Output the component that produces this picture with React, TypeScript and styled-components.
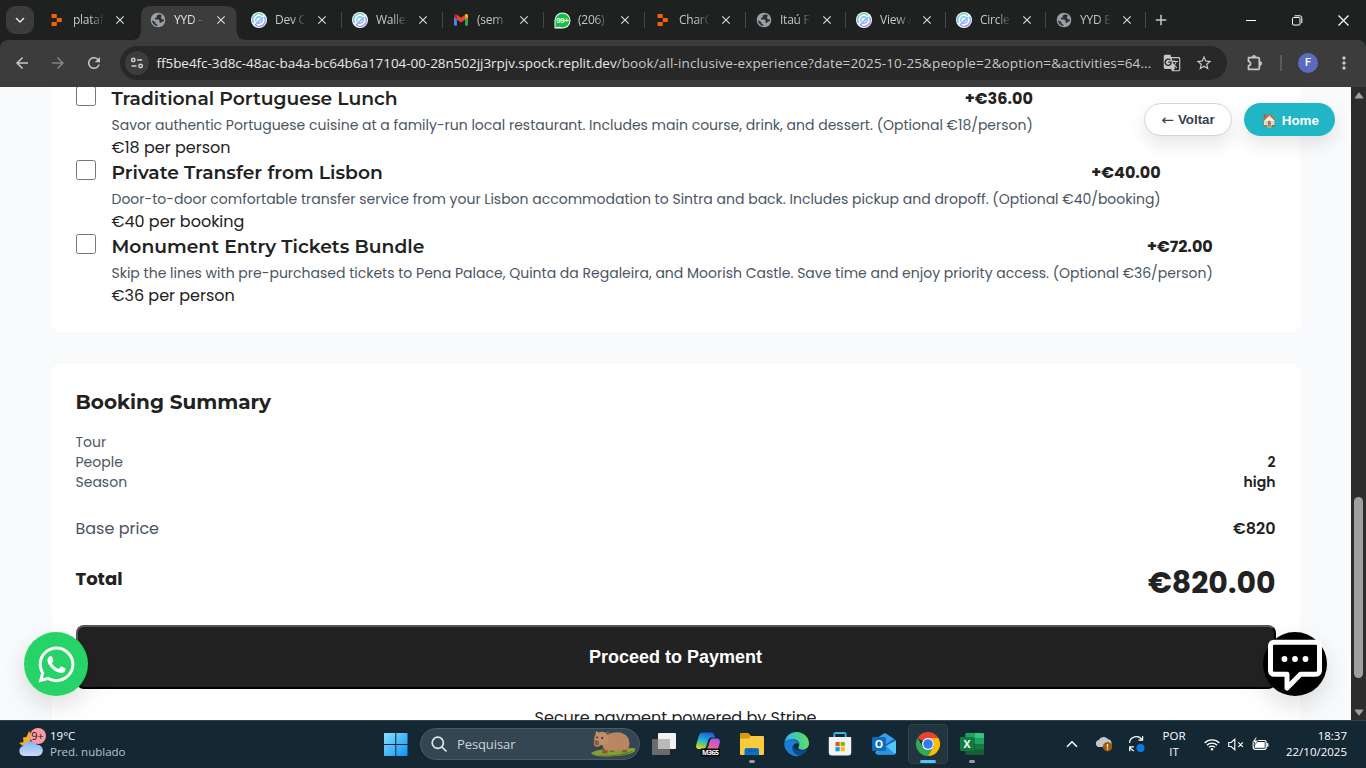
import React from "react";
import styled, { createGlobalStyle, css } from "styled-components";
import {
  MdArrowBack,
  MdArrowForward,
  MdRefresh,
  MdExpandMore,
  MdClose,
  MdAdd,
  MdGTranslate,
  MdStarBorder,
  MdMoreVert,
} from "react-icons/md";
import { FaWhatsapp } from "react-icons/fa";

const GlobalStyle = createGlobalStyle`
  * { box-sizing: border-box; }
  body { margin: 0; overflow: hidden; }
`;

const uiFont = `"Segoe UI", "Open Sans", "Noto Sans", sans-serif`;
const bodyFont = `Poppins, Inter, sans-serif`;
const headingFont = `Montserrat, Inter, sans-serif`;
const buttonFont = `Arial, "Liberation Sans", sans-serif`;

const Screen = styled.div`
  width: 1366px;
  height: 768px;
  display: flex;
  flex-direction: column;
  overflow: hidden;
  background: #1f2120;
`;

/* ---------- Browser chrome ---------- */

const TabStrip = styled.div`
  height: 40px;
  flex: none;
  display: flex;
  align-items: stretch;
  background: #1f2120;
  color: #c4c7c5;
`;

const TabSearch = styled.div`
  width: 28px;
  height: 28px;
  margin: 6px 5px 0 6px;
  border-radius: 9px;
  background: #3b3b3b;
  color: #e3e3e3;
  display: flex;
  align-items: center;
  justify-content: center;
  flex: none;
`;

const Tab = styled.div<{ $active?: boolean; $divider?: boolean; $width: number }>`
  position: relative;
  width: ${(p) => p.$width}px;
  flex: none;
  padding: 0 0 0 10px;
  display: flex;
  align-items: center;
  color: ${(p) => (p.$active ? "#e3e3e3" : "#c4c7c5")};
  ${(p) =>
    p.$divider &&
    css`
      &::after {
        content: "";
        position: absolute;
        right: 0;
        top: 12px;
        width: 1.5px;
        height: 16px;
        background: #464846;
      }
    `}
`;

const TabShape = styled.svg`
  position: absolute;
  left: -8px;
  top: 6px;
  width: 116px;
  height: 34px;
`;

const TabIcon = styled.span`
  position: relative;
  width: 16px;
  height: 16px;
  display: flex;
  align-items: center;
  justify-content: center;
  flex: none;
  svg { flex: none; }
`;

const TabTitle = styled.span`
  position: relative;
  width: 31px;
  flex: none;
  margin: 0 9px 0 8px;
  overflow: hidden;
  white-space: nowrap;
  font: 400 12px/16px ${uiFont};
  letter-spacing: -0.25px;
  mask-image: linear-gradient(to right, #000 55%, transparent 100%);
`;

const TabClose = styled.span`
  position: relative;
  display: flex;
  color: #dadada;
`;

const NewTab = styled.span`
  display: flex;
  align-items: center;
  margin-left: 6px;
`;

const WindowControls = styled.div`
  margin-left: auto;
  width: 138px;
  display: grid;
  grid-template-columns: repeat(3, 46px);
  align-items: center;
  justify-items: center;
`;

const Toolbar = styled.div`
  height: 47px;
  flex: none;
  display: flex;
  align-items: center;
  padding-bottom: 1px;
  background: #3c3c3c;
  border-radius: 8px 8px 0 0;
  color: #c7c7c7;
`;

const NavGroup = styled.div`
  display: flex;
  width: 120px;
  padding-left: 4px;
  flex: none;
`;

const NavButton = styled.span<{ $dim?: boolean }>`
  width: 36px;
  display: flex;
  justify-content: center;
  opacity: ${(p) => (p.$dim ? 0.5 : 1)};
`;

const Omnibox = styled.div`
  width: 1107px;
  height: 34px;
  flex: none;
  display: flex;
  align-items: center;
  padding: 0 14px 0 5px;
  border-radius: 17px;
  background: #282828;
`;

const SiteInfo = styled.span`
  width: 24px;
  height: 24px;
  margin-right: 7.5px;
  border-radius: 50%;
  background: #3c3c3c;
  display: flex;
  align-items: center;
  justify-content: center;
  flex: none;
`;

const Url = styled.span`
  flex: 1;
  white-space: nowrap;
  font: 400 13.5px/20px ${uiFont};
  letter-spacing: 0.12px;
  color: #c7c7c7;
`;

const UrlHost = styled.span`
  color: #e8e8e8;
  letter-spacing: -0.05px;
`;

const OmniIcons = styled.span`
  display: flex;
  align-items: center;
  gap: 14px;
`;

const ExtensionButton = styled.span`
  display: flex;
  margin-left: 18px;
`;

const ToolDivider = styled.span`
  width: 2px;
  height: 16px;
  margin: 0 16px 0 15px;
  background: #5a5a5a;
`;

const Avatar = styled.span`
  width: 20px;
  height: 20px;
  border-radius: 50%;
  background: #5c6bc0;
  color: #fff;
  font: 500 11px/20px Roboto, sans-serif;
  text-align: center;
  margin-right: 16px;
`;

/* ---------- Page ---------- */

const Viewport = styled.div`
  position: relative;
  height: 633px;
  flex: none;
  display: flex;
  overflow: hidden;
  background: #f8fafc;
`;

const Page = styled.main`
  width: 1351px;
  height: 633px;
  overflow: hidden;
  padding: 0 51.5px;
  display: flex;
  flex-direction: column;
  gap: 32px;
  font-family: ${bodyFont};
  color: #222;
`;

const Card = styled.section<{ $continued?: boolean }>`
  flex: none;
  background: #fff;
  border-radius: ${(p) => (p.$continued ? "0 0 8px 8px" : "8px")};
  padding: ${(p) => (p.$continued ? "0 24px 24px" : "24px")};
`;

const ActivityList = styled.div`
  margin-top: -1px;
`;

const Activity = styled.label`
  height: 74px;
  display: flex;
  align-items: flex-start;
  gap: 16px;
`;

const Checkbox = styled.input.attrs({ type: "checkbox" })`
  appearance: none;
  width: 20px;
  height: 20px;
  margin: 0;
  flex: none;
  border: 1px solid #767676;
  border-radius: 2.5px;
  background: #fff;
`;

const ActivityHead = styled.div`
  height: 25px;
  display: flex;
  justify-content: space-between;
  align-items: center;
`;

const ActivityTitle = styled.h3`
  margin: 0;
  font: 600 18.72px/25px ${headingFont};
  white-space: nowrap;
`;

const ActivityPrice = styled.span`
  font-size: 16px;
  font-weight: 700;
  line-height: 25px;
`;

const ActivityText = styled.p`
  margin: 4px 0 0;
  font-size: 14px;
  line-height: 20px;
  white-space: nowrap;
  color: #4b5563;
`;

const ActivityRate = styled.div`
  font-size: 16px;
  line-height: 25px;
`;

const SummaryTitle = styled.h2`
  margin: 0 0 16px;
  font: 700 20px/28px ${headingFont};
`;

const SummaryRow = styled.div<{ $size: number; $line: number }>`
  display: flex;
  justify-content: space-between;
  font-size: ${(p) => p.$size}px;
  line-height: ${(p) => p.$line}px;
  color: #4b5563;
`;

const SummaryValue = styled.span`
  font-weight: 600;
  color: #222;
`;

const BaseBlock = styled.div`
  margin: 24px 0;
`;

const TotalRow = styled.div`
  display: flex;
  justify-content: space-between;
  height: 36px;
  margin-bottom: 24px;
`;

const TotalLabel = styled.span`
  font-size: 18px;
  font-weight: 700;
  line-height: 28px;
`;

const TotalAmount = styled.span`
  font-size: 30px;
  font-weight: 700;
  line-height: 36px;
`;

const PayButton = styled.button`
  display: block;
  width: 100%;
  height: 64px;
  padding: 0;
  border: 2px solid;
  border-color: #555 #000 #000 #555;
  border-radius: 8px;
  background: #222;
  color: #fff;
  font: 700 18px/24px ${buttonFont};
`;

const SecureNote = styled.p`
  margin: 16px 0 0;
  text-align: center;
  font-size: 16px;
  line-height: 25px;
`;

const FloatingNav = styled.nav`
  position: absolute;
  top: 16px;
  right: 31px;
  display: flex;
  gap: 12px;
`;

const PillButton = styled.button<{ $primary?: boolean }>`
  width: ${(p) => (p.$primary ? 91 : 88)}px;
  height: 33px;
  padding: ${(p) => (p.$primary ? "2px 0 0 1px" : "0")};
  display: flex;
  align-items: center;
  justify-content: center;
  gap: 4px;
  border-radius: 17px;
  border: ${(p) => (p.$primary ? "none" : "1px solid #d1d5db")};
  background: ${(p) => (p.$primary ? "#21b6c5" : "#fff")};
  color: ${(p) => (p.$primary ? "#fff" : "#374151")};
  font: 700 13.33px/18px ${buttonFont};
  box-shadow: 0 8px 18px rgba(0, 0, 0, 0.1);
`;

const BackArrow = styled.span`
  font: 400 15px/18px "DejaVu Sans", sans-serif;
`;

const FloatingButton = styled.span<{ $side: "left" | "right"; $bg: string }>`
  position: absolute;
  top: 545px;
  ${(p) => (p.$side === "left" ? "left: 24px;" : "right: 39px;")}
  width: 64px;
  height: 64px;
  border-radius: 50%;
  background: ${(p) => p.$bg};
  color: #fff;
  display: flex;
  align-items: center;
  justify-content: center;
  box-shadow: 0 10px 26px rgba(0, 0, 0, 0.13);
`;

const Scrollbar = styled.div`
  width: 15px;
  display: flex;
  flex-direction: column;
  align-items: center;
  background: #2c2c2c;
`;

const ScrollArrow = styled.svg`
  width: 10px;
  height: 7px;
  margin: 5px 0 4px;
`;

const ScrollTrack = styled.div`
  flex: 1;
  padding-top: 394px;
`;

const ScrollThumb = styled.div`
  width: 9px;
  height: 181px;
  border-radius: 5px;
  background: #9f9f9f;
`;

/* ---------- Taskbar ---------- */

const Taskbar = styled.footer`
  height: 48px;
  flex: none;
  display: flex;
  align-items: center;
  box-shadow: inset 0 1px 0 #33444d;
  background: #142833;
  color: #fff;
  font: 400 11.5px/16px ${uiFont};
`;

const Weather = styled.div`
  width: 384px;
  padding-left: 18px;
  display: flex;
  align-items: center;
  gap: 4px;
`;

const WeatherText = styled.div`
  display: flex;
  flex-direction: column;
  span:last-child { color: #b9c3c8; }
`;

const SearchBox = styled.div`
  width: 220px;
  height: 32px;
  margin: 0 2px 0 12px;
  padding: 0 3px 0 10px;
  display: flex;
  align-items: center;
  border-radius: 16px;
  border: 1px solid #4a5b65;
  background: #334651;
  color: #cdd3d6;
  font: 400 13px/18px ${uiFont};
  letter-spacing: -0.1px;
`;

const SearchLabel = styled.span`
  flex: 1;
  margin-left: 10px;
`;

const AppSlot = styled.span<{ $active?: boolean; $running?: boolean }>`
  position: relative;
  width: 40px;
  height: 40px;
  margin: 0 2px;
  border-radius: 5px;
  display: flex;
  align-items: center;
  justify-content: center;
  ${(p) =>
    p.$active &&
    css`
      background: #22353f;
      box-shadow: inset 0 0 0 1px #2e414b;
    `}
  ${(p) =>
    (p.$active || p.$running) &&
    css`
      &::after {
        content: "";
        position: absolute;
        bottom: 1px;
        left: ${p.$active ? 12 : 17}px;
        width: ${p.$active ? 16 : 6}px;
        height: 3px;
        border-radius: 2px;
        background: ${p.$active ? "#4cc2ff" : "#939ca1"};
      }
    `}
`;

const Tray = styled.div`
  margin-left: auto;
  padding-right: 19px;
  display: flex;
  align-items: center;
`;

const TrayIcon = styled.span<{ $w: number }>`
  width: ${(p) => p.$w}px;
  display: flex;
  justify-content: center;
`;

const TrayText = styled.div<{ $align: "center" | "right"; $w: number }>`
  width: ${(p) => p.$w}px;
  text-align: ${(p) => p.$align};
`;

/* ---------- Drawings ---------- */

const ReplitIcon = () => (
  <svg width="16" height="16" viewBox="0 0 16 16" fill="#f26207">
    <path d="M2.500 2.800q0-.8.8-.8h3.700q.8 0 .8.8v3.300H3.300q-.8 0-.8-.8z" />
    <path d="M7.800 6.100h4.200q.8 0 .8.8v2.400q0 .8-.8.8H7.800z" />
    <path d="M3.300 10.100h4.500v3.100q0 .8-.8.8H3.300q-.8 0-.8-.8v-2.300q0-.8.8-.8z" />
  </svg>
);

const GlobeIcon = () => (
  <svg width="16" height="16" viewBox="0 0 16 16">
    <circle cx="8" cy="8" r="7.300" fill="#9aa0a6" />
    <path d="M9.300 2.200L6.800 3.600 6.600 5.400 4.800 6l.4 1.600h3.300l1.200 1.300-.4 1.800 1.300.4 1.700-1.700 1.300.2A6 6 0 0 0 14 7.600l-2.300-.4-.8-1.600 1-2A6 6 0 0 0 9.300 2.200zM1.900 8.200l3.400 1.900.4 2 1.600.4.400 1.600A6.100 6.100 0 0 1 1.900 8.200z" fill="#2f3133" />
  </svg>
);

const CircleIcon = () => (
  <svg width="16" height="16" viewBox="0 0 16 16">
    <defs>
      <linearGradient id="circleTone" gradientUnits="userSpaceOnUse" x1="5" y1="1" x2="10" y2="15">
        <stop offset="0" stopColor="#5fe0b8" />
        <stop offset="0.5" stopColor="#72b8f4" />
        <stop offset="1" stopColor="#a98bf5" />
      </linearGradient>
    </defs>
    <circle cx="8" cy="8" r="8" fill="#fff" />
    <g fill="none" stroke="url(#circleTone)" strokeLinecap="round">
      <path d="M2.400 10.500A6 6 0 0 1 11.500 3.100" strokeWidth="1.500" />
      <path d="M13.400 5.200A6 6 0 0 1 4.300 12.800L11.600 5.500" strokeWidth="1.500" />
      <path d="M5 9.300A3.300 3.300 0 0 1 9.800 5.300" strokeWidth="1.300" />
      <path d="M11.200 7.400A3.300 3.300 0 0 1 7.200 11.200" strokeWidth="1.300" />
    </g>
  </svg>
);

const GmailIcon = () => (
  <svg width="16" height="16" viewBox="0 0 16 16">
    <path d="M1 4.500v8.300q0 .9.900.9h2V7z" fill="#4285f4" />
    <path d="M12.100 7v6.700h2q.9 0 .9-.9V4.500z" fill="#34a853" />
    <path d="M12.100 3.200V7.300L15 5.200V3.800C15 2.200 13.300 1.600 12.100 2.600z" fill="#fbbc04" />
    <path d="M1 3.800V5.200L3.900 7.300V2.600C2.700 1.700 1 2.300 1 3.800z" fill="#c5221f" />
    <path d="M3.900 7.400V2.700L8 5.700l4.100-3v4.700L8 10.400z" fill="#ea4335" />
  </svg>
);

const WhatsCountIcon = () => (
  <svg width="17" height="17" viewBox="0 0 17 17">
    <path d="M.5 16.500V8.500A8 8 0 1 1 8.500 16.500z" fill="#fff" />
    <path d="M1.500 15.500V8.500A7 7 0 1 1 8.500 15.500L5 14.700z" fill="#14c13e" />
    <text x="8.500" y="11.300" fontSize="7.800" fontWeight="700" fontFamily="Liberation Sans, sans-serif" textAnchor="middle" fill="#fff" textLength="12.500">99+</text>
  </svg>
);

const TuneIcon = () => (
  <svg width="14" height="14" viewBox="0 0 14 14" fill="none" stroke="#d0d0d0" strokeWidth="1.500">
    <circle cx="3.300" cy="3.900" r="1.700" />
    <path d="M7.200 3.900h5M1.500 10h5" />
    <circle cx="10.600" cy="10" r="1.700" />
  </svg>
);

const PuzzleIcon = () => (
  <svg width="20" height="20" viewBox="0 0 20 20" fill="none" stroke="#c7c7c7" strokeWidth="1.700" strokeLinejoin="round">
    <path d="M3.500 4.700h9.800q1 0 1 1v9.600q0 1-1 1H3.500v-3.700a2.100 2.100 0 0 0 0-4.200z" />
    <path d="M7 4.400a2 2 0 0 1 4 0zM14.700 8.400a2 2 0 0 1 0 4z" fill="#c7c7c7" strokeWidth="0.800" />
  </svg>
);

const ChatIcon = () => (
  <svg width="54" height="56" viewBox="0 0 54 56">
    <path d="M6 6.200h42a3.500 3.500 0 0 1 3.500 3.500v25a3.500 3.500 0 0 1-3.500 3.500H32.500L19 52V38.200H6a3.500 3.500 0 0 1-3.500-3.500v-25A3.500 3.500 0 0 1 6 6.200z" fill="#000" stroke="#fff" strokeWidth="5" strokeLinejoin="round" />
    <g fill="#fff">
      <circle cx="16.500" cy="23" r="2.900" />
      <circle cx="27" cy="23" r="2.900" />
      <circle cx="37.500" cy="23" r="2.900" />
    </g>
  </svg>
);

const WeatherIcon = () => (
  <svg width="28" height="34" viewBox="0 0 28 34">
    <defs>
      <linearGradient id="cloud" x1="0" y1="0" x2="0" y2="1">
        <stop offset="0" stopColor="#7fb2f5" />
        <stop offset="1" stopColor="#cfdcf8" />
      </linearGradient>
    </defs>
    <path d="M1 16l4.500-1L5 10.500l3.500-.5L11 4l3 5-3 8-6 2z" fill="#f7a928" />
    <path d="M6 29a5 5 0 0 1-.5-9.900 7.500 7.500 0 0 1 13.500-1.300 5.600 5.600 0 0 1 .5 11.200z" fill="url(#cloud)" />
    <circle cx="20" cy="9" r="8" fill="#ff99a4" />
    <text x="19.600" y="12.900" fontSize="11" fontFamily="Open Sans, sans-serif" textAnchor="middle" fill="#1b1b1b">9+</text>
  </svg>
);

const StartIcon = () => (
  <svg width="24" height="24" viewBox="0 0 24 24">
    <defs>
      <linearGradient id="start" x1="0" y1="0" x2="1" y2="1">
        <stop offset="0" stopColor="#8be0ff" />
        <stop offset="1" stopColor="#0a93f5" />
      </linearGradient>
    </defs>
    <path d="M0 1.700Q0 1 .7 1h10.600v11H0zM12.300 1h10.500q.7 0 .7.700v10.300H12.300zM0 13h11.300v11H.7q-.7 0-.7-.7zM12.300 13h11.200v10.300q0 .7-.7.700H12.300z" fill="url(#start)" />
  </svg>
);

const SearchGlyph = () => (
  <svg width="16" height="16" viewBox="0 0 16 16" fill="none" stroke="#e2e6e8" strokeWidth="1.700" strokeLinecap="round">
    <circle cx="6.800" cy="6.800" r="5.600" />
    <path d="M11 11l4 4" />
  </svg>
);

const CapybaraIcon = () => (
  <svg width="46" height="28" viewBox="0 0 46 28">
    <path d="M1 23q4-3 14-4l29-1q3 1 0 4-7 4-25 4.500-16 .5-18-3.500z" fill="#84a035" />
    <path d="M1.500 24q8 2.500 22 1 14-1 21-5-6 5.500-20 5.700-20 1-23-1.700z" fill="#50701f" />
    <path d="M13 17h4.500v6.500H12zM21 18h3.500v4H20zM32 16h5v6.500h-5z" fill="#8a5a3c" />
    <path d="M16 5q8-4 16-2 7.500 3 7.500 10.500 0 6-5 6.500-9 1.500-19 0-4-4-4-9z" fill="#b98661" />
    <path d="M5.500 4.500L6 1l3 1.500Q13 1 16 3l2.300-2 .2 4.500q1 4-1.500 7.500-2 2.500-6 2-2.500 2.500-5.500 1.500-2.500-1.500-1.500-5.500Q3.800 7 5.500 4.500z" fill="#c08e68" />
    <path d="M4.500 10.500q2-1 4.500 1 .8 2.500-1 4-2.500.5-3.500-1.500-.5-2 0-3.500z" fill="#8a5d41" />
    <circle cx="7" cy="7.300" r="0.900" fill="#2d1b12" />
    <circle cx="12.300" cy="8" r="0.900" fill="#2d1b12" />
    <path d="M16 3.500l2-1.500.3 3.500z" fill="#754a33" />
  </svg>
);

const TaskViewIcon = () => (
  <svg width="24" height="24" viewBox="0 0 24 24">
    <rect x="6" y="1" width="18" height="16" rx="1" fill="#f2f2f2" />
    <rect x="0" y="7" width="18" height="16" rx="1" fill="#6b6b6b" />
    <path d="M6 7h12v10H6z" fill="#b9b9b9" />
  </svg>
);

const CopilotIcon = () => (
  <svg width="26" height="26" viewBox="0 0 26 26">
    <defs>
      <linearGradient id="copA" x1="0.500" y1="0" x2="0.200" y2="1">
        <stop offset="0" stopColor="#1b62dd" />
        <stop offset="0.500" stopColor="#23b6d8" />
        <stop offset="0.800" stopColor="#8fd13f" />
        <stop offset="1" stopColor="#ffd02a" />
      </linearGradient>
      <linearGradient id="copB" x1="0.700" y1="0" x2="0.300" y2="1">
        <stop offset="0" stopColor="#a259f0" />
        <stop offset="0.500" stopColor="#e858a8" />
        <stop offset="1" stopColor="#ff8a4f" />
      </linearGradient>
    </defs>
    <path d="M8 1.500h8q2.500 0 3.500 3l.5 2H16q-2 0-2.800 2.500L11 16q-.8 2-3 2H4Q.2 18 1.300 13.500L4 4.500Q5 1.500 8 1.500z" fill="url(#copA)" />
    <path d="M17.500 7.500H21.500q4 0 3.300 4L23 18q-1 4-4.500 4H9q2.500-1 3.300-4l2.300-8q.8-2.500 2.900-2.500z" fill="url(#copB)" />
    <path d="M13.800 10l2-3.500-2.300 8-2 3.500z" fill="#142833" />
    <rect x="6" y="17.500" width="19" height="8" fill="#080808" />
    <text x="15.500" y="24" fontSize="7" fontWeight="700" fontFamily="Open Sans, sans-serif" textAnchor="middle" fill="#fff" textLength="17">M365</text>
  </svg>
);

const FolderIcon = () => (
  <svg width="24" height="24" viewBox="0 0 24 24">
    <path d="M0 2q0-1 1-1h7.500L11 4v5H0z" fill="#d99a0b" />
    <path d="M0 6.500h8.500L11 4h12q1 0 1 1v17q0 1-1 1H1q-1 0-1-1z" fill="#fccb3d" />
    <path d="M4.500 23v-5q0-2 2-2h10.500q2 0 2 2v5z" fill="#0b71c4" />
    <path d="M8 18.500h8v1.200H8z" fill="#0a5595" />
  </svg>
);

const EdgeIcon = () => (
  <svg width="25" height="25" viewBox="0 0 24 24">
    <defs>
      <linearGradient id="edgeA" x1="0" y1="0.300" x2="1" y2="0.200">
        <stop offset="0" stopColor="#2fb5ee" />
        <stop offset="1" stopColor="#62e05a" />
      </linearGradient>
    </defs>
    <path d="M.3 10C1.500 4 6.300 0 12 0c6.500 0 12 4.800 12 10.700 0 4-2.900 6.300-6.300 6.300-3 0-4-1.200-4-2 0-.9 1-1.300 1-3.300 0-2.600-2.500-4.700-5.700-4.700C5 7 1.200 8 .3 10z" fill="url(#edgeA)" />
    <path d="M.2 11C1 7.800 5 6.200 8.800 7c3 .600 5.500 2.500 5.800 4.500-2-1.300-4.600-.8-5.800 1.500-2 4 1.500 9.300 6.700 9.700A12 12 0 0 1 .2 11z" fill="#1b7ed6" />
    <path d="M8.800 13c-2 4 1.500 9.500 7 9.500 2.500-.9 5-2.700 6.500-5.200.3-.6-.1-.9-.7-.6-4 2-11.500 1.300-12.800-3.700z" fill="#0c4a94" />
  </svg>
);

const StoreIcon = () => (
  <svg width="24" height="24" viewBox="0 0 24 24">
    <path d="M6.300 6V2.200q0-1.200 1.200-1.200h9q1.200 0 1.200 1.200V6" fill="none" stroke="#33b8ea" strokeWidth="1.800" />
    <path d="M.8 5h22.400v15.500q0 3-3 3H3.800q-3 0-3-3z" fill="#f4f4f4" />
    <path d="M7.500 10h4.200v4.200H7.500z" fill="#f25022" />
    <path d="M12.600 10h4.200v4.200h-4.200z" fill="#7fba00" />
    <path d="M7.500 15.100h4.200v4.200H7.500z" fill="#00a4ef" />
    <path d="M12.600 15.100h4.200v4.200h-4.200z" fill="#ffb900" />
  </svg>
);

const OutlookIcon = () => (
  <svg width="24" height="24" viewBox="0 0 24 24">
    <path d="M2.500 8L13 1l11 7v4L3 14z" fill="#1565c0" />
    <path d="M5 6L13 1l9 6-9 6H5z" fill="#3aa0ea" />
    <path d="M24 8.500V20q0 2.500-2.500 2.500H6q-2.500 0-2.500-2.500l12-7z" fill="#58c6f7" />
    <path d="M4 21l9.500-7.500L23 21.900q-.8.600-1.800.6H6q-1.400 0-2-1.500z" fill="#2396e8" />
    <rect x="0" y="5" width="14" height="14" rx="1.500" fill="#0f6cbd" />
    <text x="7" y="15.800" fontSize="10.500" fontWeight="700" fontFamily="Open Sans, sans-serif" textAnchor="middle" fill="#fff">O</text>
  </svg>
);

const ChromeIcon = () => (
  <svg width="24" height="24" viewBox="0 0 24 24">
    <path d="M12 12L1.600 6A12 12 0 0 1 22.400 6z" fill="#ea4335" />
    <path d="M1.600 6A12 12 0 0 0 12 24l5.200-9L12 12 6.800 15z" fill="#34a853" />
    <path d="M22.400 6A12 12 0 0 1 12 24l5.200-9A6 6 0 0 0 12 6z" fill="#fbbc05" />
    <circle cx="12" cy="12" r="6" fill="#fff" />
    <circle cx="12" cy="12" r="4.800" fill="#2f7cf6" />
  </svg>
);

const ExcelIcon = () => (
  <svg width="24" height="24" viewBox="0 0 24 24">
    <rect x="5.500" y="1" width="18.500" height="22" rx="1.200" fill="#185c37" />
    <path d="M5.500 2.200Q5.500 1 6.700 1H15v5.500H5.500z" fill="#21a366" />
    <path d="M15 1h7.800q1.200 0 1.200 1.200v4.300h-9z" fill="#33c481" />
    <path d="M5.500 6.500H15V12H5.500z" fill="#107c41" />
    <path d="M15 6.500h9V12h-9z" fill="#21a366" />
    <path d="M15 12h9v5.500h-9z" fill="#107c41" />
    <rect x="0" y="5" width="14" height="14" rx="1.200" fill="#107c41" />
    <text x="7" y="15.800" fontSize="10.500" fontWeight="700" fontFamily="Open Sans, sans-serif" textAnchor="middle" fill="#fff">X</text>
  </svg>
);

const ChevronUp = () => (
  <svg width="12" height="8" viewBox="0 0 12 8" fill="none" stroke="#fff" strokeWidth="1.500">
    <path d="M1 6.700L6 1.700l5 5" />
  </svg>
);

const CloudAlert = () => (
  <svg width="18" height="16" viewBox="0 0 18 16">
    <path d="M4 11a3.500 3.500 0 0 1-.3-6.900A5.300 5.300 0 0 1 13 3.300 4 4 0 0 1 14 11z" fill="#c4c7c9" />
    <circle cx="12.500" cy="10.800" r="4.700" fill="#a55a08" />
    <path d="M12.500 8v3.600M12.500 12.500v1.300" stroke="#fff" strokeWidth="1.300" />
  </svg>
);

const SyncIcon = () => (
  <svg width="17" height="18" viewBox="0 0 17 18" fill="none" stroke="#fff" strokeWidth="1.200">
    <path d="M1.500 8A6.800 6.800 0 0 1 14 4.700M14.600 1v4.200h-4.200M6 16A7 7 0 0 1 2 12.200M1.700 16.200v-4.400h4.200" />
    <circle cx="12.500" cy="13" r="4" fill="#0a7be0" stroke="none" />
  </svg>
);

const WifiIcon = () => (
  <svg width="16" height="13" viewBox="0 0 16 13" fill="none" stroke="#fff" strokeWidth="1.300">
    <path d="M.7 5A10.300 10.300 0 0 1 15.300 5M2.900 7.200a7.200 7.200 0 0 1 10.200 0M5 9.400a4.300 4.300 0 0 1 6 0" />
    <circle cx="8" cy="11.300" r="1.200" fill="#fff" stroke="none" />
  </svg>
);

const MuteIcon = () => (
  <svg width="16" height="13" viewBox="0 0 16 13" fill="none" stroke="#fff" strokeWidth="1.100">
    <path d="M.7 4.500h2.500L6.800 1.200v10.600L3.200 8.500H.7zM10.300 4.300l4.600 4.600M14.900 4.300l-4.600 4.600" />
  </svg>
);

const BatteryIcon = () => (
  <svg width="17" height="14" viewBox="0 0 17 14">
    <rect x="1.200" y="3.500" width="13" height="8.800" rx="2" fill="none" stroke="#fff" strokeWidth="1.200" />
    <rect x="2.700" y="5" width="10" height="5.800" fill="#fff" />
    <path d="M15 6.300h1.400v3.400H15z" fill="#fff" />
    <path d="M3.800 0L.3 5.300H2.800L2 9 6 3.600H3.500L5 0z" fill="#fff" stroke="#142833" strokeWidth="0.600" />
  </svg>
);

/* ---------- Data ---------- */

const tabs = [
  { title: "plataforma", icon: <ReplitIcon />, width: 101 },
  { title: "YYD - Yes", icon: <GlobeIcon />, width: 101, active: true },
  { title: "Dev Console", icon: <CircleIcon />, width: 101 },
  { title: "Wallets", icon: <CircleIcon />, width: 101 },
  { title: "(sem assunto)", icon: <GmailIcon />, width: 101 },
  { title: "(206) W", icon: <WhatsCountIcon />, width: 101 },
  { title: "CharCode", icon: <ReplitIcon />, width: 101 },
  { title: "Itaú Fácil", icon: <GlobeIcon />, width: 100 },
  { title: "View API", icon: <CircleIcon />, width: 100 },
  { title: "Circle Dev", icon: <CircleIcon />, width: 100 },
  { title: "YYD Book", icon: <GlobeIcon />, width: 100 },
];

const activities = [
  {
    title: "Traditional Portuguese Lunch",
    price: "+€36.00",
    text: "Savor authentic Portuguese cuisine at a family-run local restaurant. Includes main course, drink, and dessert. (Optional €18/person)",
    rate: "€18 per person",
  },
  {
    title: "Private Transfer from Lisbon",
    price: "+€40.00",
    text: "Door-to-door comfortable transfer service from your Lisbon accommodation to Sintra and back. Includes pickup and dropoff. (Optional €40/booking)",
    rate: "€40 per booking",
  },
  {
    title: "Monument Entry Tickets Bundle",
    price: "+€72.00",
    text: "Skip the lines with pre-purchased tickets to Pena Palace, Quinta da Regaleira, and Moorish Castle. Save time and enjoy priority access. (Optional €36/person)",
    rate: "€36 per person",
  },
];

export default function App() {
  return (
    <Screen>
      <GlobalStyle />
      <TabStrip>
        <TabSearch>
          <MdExpandMore size={18} />
        </TabSearch>
        {tabs.map((tab, i) => (
          <Tab key={tab.title} $active={tab.active} $divider={i > 1} $width={tab.width}>
            {tab.active && (
              <TabShape viewBox="0 0 116 34">
                <path d="M0 34Q9 34 9 24V10Q9 0 19 0H94.500Q104.500 0 104.500 10V24Q104.500 34 115 34z" fill="#3c3c3c" />
              </TabShape>
            )}
            <TabIcon>{tab.icon}</TabIcon>
            <TabTitle>{tab.title}</TabTitle>
            <TabClose>
              <MdClose size={14} />
            </TabClose>
          </Tab>
        ))}
        <NewTab>
          <MdAdd size={18} />
        </NewTab>
        <WindowControls>
          <svg width="10" height="10" stroke="#fff"><path d="M0 5.500h10" /></svg>
          <svg width="11" height="11" fill="none" stroke="#fff">
            <rect x="0.500" y="2.500" width="7.500" height="7.500" rx="1" />
            <path d="M2.500.8h5.300q2 0 2 2v5.400" />
          </svg>
          <svg width="11" height="11" stroke="#fff" strokeWidth="1.200"><path d="M.5.5l10 10M10.500.5l-10 10" /></svg>
        </WindowControls>
      </TabStrip>

      <Toolbar>
        <NavGroup>
          <NavButton><MdArrowBack size={18} /></NavButton>
          <NavButton $dim><MdArrowForward size={18} /></NavButton>
          <NavButton><MdRefresh size={18} /></NavButton>
        </NavGroup>
        <Omnibox>
          <SiteInfo><TuneIcon /></SiteInfo>
          <Url>
            <UrlHost>ff5be4fc-3d8c-48ac-ba4a-bc64b6a17104-00-28n502jj3rpjv.spock.replit.dev</UrlHost>
            /book/all-inclusive-experience?date=2025-10-25&amp;people=2&amp;option=&amp;activities=64...
          </Url>
          <OmniIcons>
            <MdGTranslate size={18} />
            <MdStarBorder size={18} />
          </OmniIcons>
        </Omnibox>
        <ExtensionButton><PuzzleIcon /></ExtensionButton>
        <ToolDivider />
        <Avatar>F</Avatar>
        <MdMoreVert size={20} />
      </Toolbar>

      <Viewport>
        <Page>
          <Card $continued>
            <ActivityList>
              {activities.map((a) => (
                <Activity key={a.title}>
                  <Checkbox />
                  <div>
                    <ActivityHead>
                      <ActivityTitle>{a.title}</ActivityTitle>
                      <ActivityPrice>{a.price}</ActivityPrice>
                    </ActivityHead>
                    <ActivityText>{a.text}</ActivityText>
                    <ActivityRate>{a.rate}</ActivityRate>
                  </div>
                </Activity>
              ))}
            </ActivityList>
          </Card>

          <Card>
            <SummaryTitle>Booking Summary</SummaryTitle>
            <SummaryRow $size={14} $line={20}>Tour</SummaryRow>
            <SummaryRow $size={14} $line={20}>
              People<SummaryValue>2</SummaryValue>
            </SummaryRow>
            <SummaryRow $size={14} $line={20}>
              Season<SummaryValue>high</SummaryValue>
            </SummaryRow>
            <BaseBlock>
              <SummaryRow $size={16} $line={25}>
                Base price<SummaryValue>€820</SummaryValue>
              </SummaryRow>
            </BaseBlock>
            <TotalRow>
              <TotalLabel>Total</TotalLabel>
              <TotalAmount>€820.00</TotalAmount>
            </TotalRow>
            <PayButton>Proceed to Payment</PayButton>
            <SecureNote>Secure payment powered by Stripe</SecureNote>
          </Card>
        </Page>
        <Scrollbar>
          <ScrollArrow viewBox="0 0 10 7"><path d="M5 .8L9 6H1z" fill="#9f9f9f" stroke="#9f9f9f" strokeLinejoin="round" /></ScrollArrow>
          <ScrollTrack><ScrollThumb /></ScrollTrack>
          <ScrollArrow viewBox="0 0 10 7"><path d="M5 6.200L9 1H1z" fill="#9f9f9f" stroke="#9f9f9f" strokeLinejoin="round" /></ScrollArrow>
        </Scrollbar>
        <FloatingNav>
          <PillButton><BackArrow>←</BackArrow>Voltar</PillButton>
          <PillButton $primary>🏠 Home</PillButton>
        </FloatingNav>
        <FloatingButton $side="left" $bg="#25d366"><FaWhatsapp size={41} /></FloatingButton>
        <FloatingButton $side="right" $bg="#000"><ChatIcon /></FloatingButton>
      </Viewport>

      <Taskbar>
        <Weather>
          <WeatherIcon />
          <WeatherText>
            <span>19°C</span>
            <span>Pred. nublado</span>
          </WeatherText>
        </Weather>
        <StartIcon />
        <SearchBox>
          <SearchGlyph />
          <SearchLabel>Pesquisar</SearchLabel>
          <CapybaraIcon />
        </SearchBox>
        <AppSlot><TaskViewIcon /></AppSlot>
        <AppSlot><CopilotIcon /></AppSlot>
        <AppSlot $running><FolderIcon /></AppSlot>
        <AppSlot><EdgeIcon /></AppSlot>
        <AppSlot><StoreIcon /></AppSlot>
        <AppSlot><OutlookIcon /></AppSlot>
        <AppSlot $active><ChromeIcon /></AppSlot>
        <AppSlot $running><ExcelIcon /></AppSlot>
        <Tray>
          <TrayIcon $w={32}><ChevronUp /></TrayIcon>
          <TrayIcon $w={32}><CloudAlert /></TrayIcon>
          <TrayIcon $w={32}><SyncIcon /></TrayIcon>
          <TrayText $align="center" $w={44}>POR<br />IT</TrayText>
          <TrayIcon $w={32}><WifiIcon /></TrayIcon>
          <TrayIcon $w={16}><MuteIcon /></TrayIcon>
          <TrayIcon $w={32}><BatteryIcon /></TrayIcon>
          <TrayText $align="right" $w={71}>18:37<br />22/10/2025</TrayText>
        </Tray>
      </Taskbar>
    </Screen>
  );
}
